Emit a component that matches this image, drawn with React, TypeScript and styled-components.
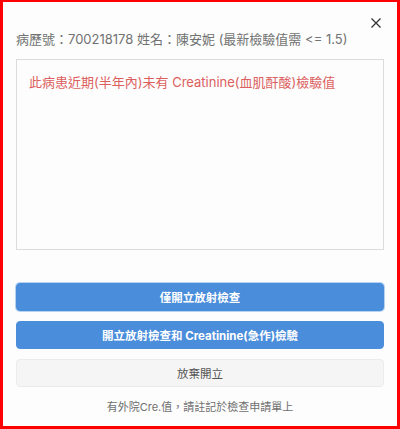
import React from "react";
import styled, { createGlobalStyle } from "styled-components";

const Global = createGlobalStyle`
  html, body { margin: 0; padding: 0; background: #fff; }
  body { font-family: Inter, "Noto Sans CJK TC", sans-serif; }
  * { box-sizing: border-box; }
`;

const Frame = styled.div`
  width: 400px;
  height: 429px;
  border: 3px solid #ff0000;
  border-top-width: 2px;
  background: #fcfdfc;
  position: relative;
  padding: 28px 13px 0 13px;
  display: flex;
  flex-direction: column;
`;

const Close = styled.button`
  position: absolute;
  top: 16px;
  right: 16px;
  width: 10px;
  height: 10px;
  padding: 0;
  border: none;
  background: transparent;
  display: flex;
  align-items: center;
  justify-content: center;
`;

const Header = styled.div`
  font-size: 13px;
  color: #727272;
  line-height: 18px;
  margin-bottom: 11px;
`;

const MessageBox = styled.div`
  height: 191px;
  border: 1px solid #dcdcdc;
  background: #fcfdfc;
  padding: 13px 12px;
  font-size: 13px;
  color: #dc5f5f;
  line-height: 18px;
`;

const Actions = styled.div`
  display: flex;
  flex-direction: column;
  gap: 10px;
  margin-top: 33px;
`;

const Button = styled.button<{ $primary?: boolean; $focused?: boolean }>`
  height: 28px;
  width: 100%;
  border-radius: 4px;
  font-family: Inter, "Noto Sans CJK TC", sans-serif;
  font-size: 11.5px;
  font-weight: ${(p) => (p.$primary ? 700 : 400)};
  color: ${(p) => (p.$primary ? "#ffffff" : "#555555")};
  background: ${(p) => (p.$primary ? "#4a8ddb" : "#f5f5f5")};
  border: 1px solid ${(p) => (p.$primary ? "#4a8ddb" : "#ebebeb")};
  box-shadow: ${(p) => (p.$focused ? "0 0 0 1px #b7d3f2" : "none")};
  display: flex;
  align-items: center;
  justify-content: center;
  padding: 0;
`;

const Note = styled.div`
  text-align: center;
  font-size: 11px;
  color: #707070;
  margin-top: 12px;
  line-height: 16px;
`;

export default function App() {
  return (
    <>
      <Global />
      <Frame>
        <Close aria-label="close">
          <svg width="10" height="10" viewBox="0 0 10 10">
            <path d="M0.5 0.5 L9.5 9.5 M9.5 0.5 L0.5 9.5" stroke="#333" strokeWidth="1.3" />
          </svg>
        </Close>
        <Header>病歷號：700218178 姓名：陳安妮 (最新檢驗值需 &lt;= 1.5)</Header>
        <MessageBox>此病患近期(半年內)未有 Creatinine(血肌酐酸)檢驗值</MessageBox>
        <Actions>
          <Button $primary $focused>僅開立放射檢查</Button>
          <Button $primary>開立放射檢查和 Creatinine(急作)檢驗</Button>
          <Button>放棄開立</Button>
        </Actions>
        <Note>有外院Cre.值，請註記於檢查申請單上</Note>
      </Frame>
    </>
  );
}
